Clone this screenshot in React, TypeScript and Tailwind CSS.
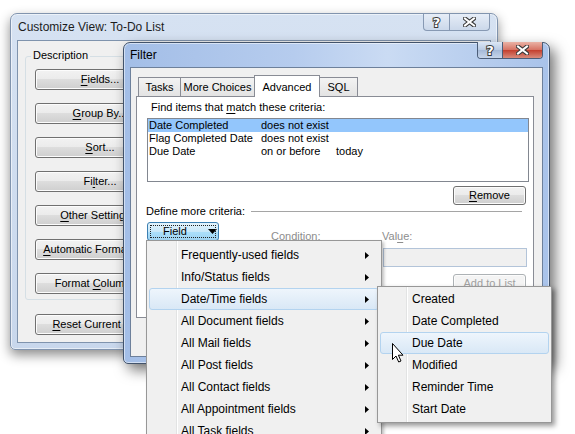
import React from "react";

const font = "font-['Liberation_Sans',Arial,sans-serif]";

function U({ children }: { children: React.ReactNode }) {
  return <span className="underline decoration-1 underline-offset-[2px]">{children}</span>;
}

function Btn({
  className = "",
  children,
  disabled = false,
}: {
  className?: string;
  children: React.ReactNode;
  disabled?: boolean;
}) {
  return (
    <div
      className={`flex shrink-0 items-center justify-center rounded-[3px] border text-[11px] leading-none shadow-[inset_0_0_0_1px_#fcfcfc] ${
        disabled
          ? "border-[#adb2b5] bg-[#f4f4f4] text-[#a0a0a0]"
          : "border-[#707070] bg-[linear-gradient(#f2f2f2_0%,#ebebeb_49%,#dddddd_50%,#cfcfcf_100%)] text-black"
      } ${className}`}
    >
      <span className="whitespace-nowrap">{children}</span>
    </div>
  );
}

function QGlyph() {
  return (
    <span className="font-['DejaVu_Sans',sans-serif] text-[13px] font-bold leading-none text-white [-webkit-text-stroke:2px_#3a3a3a] [paint-order:stroke_fill]">
      ?
    </span>
  );
}

function XGlyph() {
  return (
    <svg width="13" height="10" viewBox="0 0 13 10">
      <path d="M2 1.5 L11 8.5 M11 1.5 L2 8.5" stroke="#3a3a3a" strokeWidth="4.2" strokeLinecap="square" />
      <path d="M2 1.5 L11 8.5 M11 1.5 L2 8.5" stroke="#ffffff" strokeWidth="2" strokeLinecap="square" />
    </svg>
  );
}

function Arrow() {
  return (
    <svg width="4" height="7" viewBox="0 0 4 7" className="shrink-0">
      <path d="M0 0 L4 3.5 L0 7 Z" fill="#000" />
    </svg>
  );
}

function MenuItem({ label, hot = false, sub = true }: { label: string; hot?: boolean; sub?: boolean }) {
  return (
    <div
      className={`mx-[2px] flex h-[22px] items-center rounded-[3px] border pl-[31px] pr-[9px] ${
        hot ? "border-[#b3d3ef] bg-[linear-gradient(#eef5fc,#d9e8f6)]" : "border-transparent"
      }`}
    >
      <span className="flex-1 text-[12px] leading-none text-black">{label}</span>
      {sub && <Arrow />}
    </div>
  );
}

export default function App() {
  const mainItems = [
    "Frequently-used fields",
    "Info/Status fields",
    "Date/Time fields",
    "All Document fields",
    "All Mail fields",
    "All Post fields",
    "All Contact fields",
    "All Appointment fields",
    "All Task fields",
  ];
  const subItems = ["Created", "Date Completed", "Due Date", "Modified", "Reminder Time", "Start Date"];

  return (
    <div className={`relative h-[434px] w-[575px] overflow-hidden whitespace-nowrap bg-white ${font} text-[11px] text-black`}>
      {/* Back window: Customize View */}
      <div className="absolute left-[10px] top-[13px] flex h-[337px] w-[488px] flex-col rounded-t-[7px] rounded-b-[5px] border border-[#8194ae] bg-[linear-gradient(180deg,#d6e2f2_0%,#c8d7ec_100%)] shadow-[0_5px_12px_rgba(0,0,0,0.45),inset_0_0_0_1px_rgba(255,255,255,0.55)]">
        <div className="relative flex h-[26px] shrink-0 items-center pl-[7px]">
          <span className="text-[12px] leading-none text-[#1c1c1c]">Customize View: To-Do List</span>
          <div className="absolute right-[7px] top-0 flex h-[17px] w-[67px] overflow-hidden rounded-b-[4px] border border-t-0 border-[#8799b3] bg-[linear-gradient(#e6edf7,#cbd8ea)]">
            <div className="flex w-[26px] items-center justify-center border-r border-[#8799b3]">
              <QGlyph />
            </div>
            <div className="flex flex-1 items-center justify-center">
              <XGlyph />
            </div>
          </div>
        </div>
        <div className="mx-[6px] mb-[6px] flex flex-1 flex-col border border-[#7f93ad] bg-[#f0f0f0]">
          <div className="relative ml-[7px] mt-[15px] h-[244px] w-[200px] rounded-[3px] border border-[#d5dfe5]">
            <span className="absolute -top-[9px] left-[5px] bg-[#f0f0f0] px-[2px] leading-[15px]">Description</span>
            <div className="flex flex-col gap-[13px] pl-[9px] pt-[12px]">
              <Btn className="h-[21px] w-[130px]">
                <U>F</U>ields...
              </Btn>
              <Btn className="h-[21px] w-[130px]">
                <U>G</U>roup By...
              </Btn>
              <Btn className="h-[21px] w-[130px]">
                <U>S</U>ort...
              </Btn>
              <Btn className="h-[21px] w-[130px]">
                Fi<U>l</U>ter...
              </Btn>
              <Btn className="h-[21px] w-[130px]">
                <U>O</U>ther Settings...
              </Btn>
              <Btn className="h-[21px] w-[130px]">
                <U>A</U>utomatic Formatting...
              </Btn>
              <Btn className="h-[21px] w-[130px]">
                Format <U>C</U>olumns...
              </Btn>
            </div>
          </div>
          <Btn className="ml-[17px] mt-[14px] h-[21px] w-[130px]">
            <U>R</U>eset Current View
          </Btn>
        </div>
      </div>

      {/* Front window: Filter */}
      <div className="absolute left-[123px] top-[42px] flex h-[322px] w-[427px] flex-col rounded-t-[7px] rounded-b-[5px] border border-[#42536b] bg-[linear-gradient(90deg,#a3bee7_0%,#b6ccee_40%,#cadbf3_62%,#a9c3ea_100%)] shadow-[5px_6px_14px_rgba(0,0,0,0.55),inset_0_0_0_1px_rgba(255,255,255,0.5)]">
        <div className="relative flex h-[24px] shrink-0 items-center pl-[6px]">
          <span className="text-[12px] leading-none text-black">Filter</span>
          <div className="absolute right-[6px] top-[-1px] flex h-[17px] w-[66px] overflow-hidden rounded-b-[4px] border border-t-0 border-[#4b5d78]">
            <div className="flex w-[25px] items-center justify-center border-r border-[#4b5d78] bg-[linear-gradient(#dbe6f5_0%,#b9cae3_50%,#a5b9d8_51%,#c6d5ea_100%)]">
              <QGlyph />
            </div>
            <div className="flex flex-1 items-center justify-center bg-[linear-gradient(#eab2a5_0%,#d77465_48%,#c4402f_52%,#d88b7c_100%)]">
              <XGlyph />
            </div>
          </div>
        </div>
        <div className="mx-[6px] mb-[6px] flex flex-1 flex-col border border-[#6d809b] bg-[#f0f0f0] px-[5px] pt-[7px]">
          {/* tabs */}
          <div className="flex h-[21px] items-end pl-[2px]">
            <div className="flex h-[19px] w-[43px] items-center justify-center border border-b-0 border-[#898c95] bg-[linear-gradient(#f3f3f3,#e3e3e3)]">
              Tasks
            </div>
            <div className="-ml-px flex h-[19px] w-[75px] items-center justify-center border border-b-0 border-[#898c95] bg-[linear-gradient(#f3f3f3,#e3e3e3)]">
              More Choices
            </div>
            <div className="relative z-10 -mb-px -ml-px flex h-[22px] w-[66px] items-start justify-center border border-b-0 border-[#898c95] bg-white pt-[3px]">
              Advanced
            </div>
            <div className="-ml-px flex h-[19px] w-[39px] items-center justify-center border border-b-0 border-[#898c95] bg-[linear-gradient(#f3f3f3,#e3e3e3)]">
              SQL
            </div>
          </div>
          {/* panel */}
          <div className="flex h-[222px] w-[398px] flex-col border border-[#898c95] bg-white">
            <div className="ml-[14px] mt-[3px] h-[15px] leading-[15px]">
              Find items that <U>m</U>atch these criteria:
            </div>
            <div className="ml-[10px] mt-[3px] flex h-[64px] w-[382px] flex-col border border-[#828790] bg-white">
              {[
                ["Date Completed", "does not exist", ""],
                ["Flag Completed Date", "does not exist", ""],
                ["Due Date", "on or before", "today"],
              ].map((r, i) => (
                <div
                  key={i}
                  className={`flex h-[13px] items-center pl-[1px] leading-[13px] ${i === 0 ? "bg-[#93c6fc]" : ""}`}
                >
                  <span className="w-[112px] shrink-0">{r[0]}</span>
                  <span className="w-[75px] shrink-0">{r[1]}</span>
                  <span>{r[2]}</span>
                </div>
              ))}
            </div>
            <Btn className="ml-[316px] mt-[4px] h-[19px] w-[73px]">
              <U>R</U>emove
            </Btn>
            <div className="-mt-px ml-[9px] flex h-[14px] w-[376px] items-center">
              <span className="leading-[14px]">Define more criteria:</span>
              <div className="ml-[6px] h-px flex-1 bg-[#a5a5a5]" />
            </div>
            <div className="ml-[10px] mt-[4px] flex items-start">
              <div className="relative flex h-[19px] w-[72px] shrink-0 items-center rounded-[3px] border border-[#3c7fb1] bg-[linear-gradient(#e3f3fc_0%,#c9e8f9_50%,#ace0fb_51%,#9fd3f2_100%)]">
                <div className="absolute inset-[2px] border border-dotted border-[#222]" />
                <span className="ml-[15px] leading-none">Field</span>
                <svg width="9" height="5" viewBox="0 0 9 5" className="ml-[21px]">
                  <path d="M0 0 L9 0 L4.5 5 Z" fill="#000" />
                </svg>
              </div>
              <div className="ml-[52px] mt-[7px] w-[111px] shrink-0 leading-[14px] text-[#8d8d8d]">
                <U>C</U>ondition:
              </div>
              <div className="mt-[7px] leading-[14px] text-[#8d8d8d]">
                Val<U>u</U>e:
              </div>
            </div>
            <div className="ml-[246px] mt-[5px] h-[19px] w-[144px] border border-[#b3c4d9] bg-[#f0f0f0]" />
            <Btn disabled className="ml-[316px] mt-[7px] h-[19px] w-[73px]">
              Add to <U>L</U>ist
            </Btn>
          </div>
        </div>
      </div>

      {/* Field menu */}
      <div className="absolute left-[146px] top-[240px] h-[210px] w-[236px] border border-[#979797] bg-[#f0f0f0] pt-[3px] shadow-[2px_2px_3px_rgba(0,0,0,0.25)]">
        <div className="absolute bottom-0 left-[29px] top-0 w-px bg-[#e2e3e3]" />
        <div className="absolute bottom-0 left-[30px] top-0 w-px bg-white" />
        <div className="relative flex flex-col">
          {mainItems.map((m) => (
            <MenuItem key={m} label={m} hot={m === "Date/Time fields"} />
          ))}
        </div>
      </div>

      {/* Date/Time submenu */}
      <div className="absolute left-[377px] top-[286px] h-[137px] w-[175px] border border-[#979797] bg-[#f0f0f0] pt-px shadow-[3px_3px_5px_rgba(0,0,0,0.4)]">
        <div className="absolute bottom-0 left-[28px] top-0 w-px bg-[#e2e3e3]" />
        <div className="absolute bottom-0 left-[29px] top-0 w-px bg-white" />
        <div className="relative flex flex-col">
          {subItems.map((m) => (
            <MenuItem key={m} label={m} hot={m === "Due Date"} sub={false} />
          ))}
        </div>
      </div>

      {/* mouse cursor */}
      <svg width="13" height="21" viewBox="0 0 13 21" className="absolute left-[391px] top-[342px]">
        <path
          d="M1.5 1.5 L1.5 17.5 L5 14 L7.7 20 L10 19 L7.4 13.2 L12 13.2 Z"
          fill="#fff"
          stroke="#000"
          strokeWidth="1"
          strokeLinejoin="miter"
        />
      </svg>
    </div>
  );
}
